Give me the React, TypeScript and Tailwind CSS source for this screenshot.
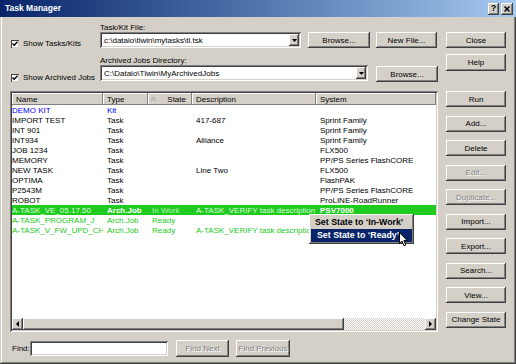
import React from "react";

const raised =
  "shadow-[inset_-1px_-1px_0_#404040,inset_1px_1px_0_#ffffff,inset_-2px_-2px_0_#808080,inset_2px_2px_0_#d4d0c8]";
const raisedThin = "shadow-[inset_-1px_-1px_0_#808080,inset_1px_1px_0_#ffffff]";
const sunken =
  "shadow-[inset_1px_1px_0_#808080,inset_-1px_-1px_0_#ffffff,inset_2px_2px_0_#404040,inset_-2px_-2px_0_#d4d0c8]";

type Row = {
  name: string;
  type: string;
  state?: string;
  desc?: string;
  sys?: string;
  kind: "kit" | "task" | "job" | "sel";
};

const rows: Row[] = [
  { name: "DEMO KIT", type: "Kit", kind: "kit" },
  { name: "IMPORT TEST", type: "Task", desc: "417-687", sys: "Sprint Family", kind: "task" },
  { name: "INT 901", type: "Task", sys: "Sprint Family", kind: "task" },
  { name: "INT934", type: "Task", desc: "Alliance", sys: "Sprint Family", kind: "task" },
  { name: "JOB 1234", type: "Task", sys: "FLX500", kind: "task" },
  { name: "MEMORY", type: "Task", sys: "PP/PS Series FlashCORE", kind: "task" },
  { name: "NEW TASK", type: "Task", desc: "Line Two", sys: "FLX500", kind: "task" },
  { name: "OPTIMA", type: "Task", sys: "FlashPAK", kind: "task" },
  { name: "P2543M", type: "Task", sys: "PP/PS Series FlashCORE", kind: "task" },
  { name: "ROBOT", type: "Task", sys: "ProLINE-RoadRunner", kind: "task" },
  {
    name: "A-TASK_VE_05.17.50",
    type: "Arch.Job",
    state: "In Work",
    desc: "A-TASK_VERIFY task description",
    sys: "PSV7000",
    kind: "sel",
  },
  { name: "A-TASK_PROGRAM_J", type: "Arch.Job", state: "Ready", kind: "job" },
  {
    name: "A-TASK_V_FW_UPD_CH",
    type: "Arch.Job",
    state: "Ready",
    desc: "A-TASK_VERIFY task description",
    kind: "job",
  },
];

function Btn({
  label,
  className = "",
  disabled = false,
}: {
  label: string;
  className?: string;
  disabled?: boolean;
}) {
  return (
    <div
      className={`flex shrink-0 items-center justify-center bg-[#d4d0c8] ${raised} ${
        disabled ? "text-[#808080] [text-shadow:1px_1px_0_#ffffff]" : "text-black"
      } ${className}`}
    >
      {label}
    </div>
  );
}

function Combo({ value, className = "" }: { value: string; className?: string }) {
  return (
    <div className={`flex h-[16px] shrink-0 items-center bg-white pl-[4px] ${sunken} ${className}`}>
      <span className="flex-1 truncate">{value}</span>
      <div className={`mr-[2px] flex h-[12px] w-[10px] items-center justify-center bg-[#d4d0c8] ${raised}`}>
        <svg width="5" height="3" viewBox="0 0 5 3">
          <path d="M0 0h5L2.5 3z" fill="#000" />
        </svg>
      </div>
    </div>
  );
}

function Check({ label }: { label: string }) {
  return (
    <div className="flex items-center gap-[4px] pl-[1px]">
      <div className="flex h-[8px] w-[8px] items-center justify-center bg-white shadow-[inset_1px_1px_0_#404040,inset_-1px_-1px_0_#d4d0c8]">
        <svg width="6" height="6" viewBox="0 0 6 6">
          <path d="M0.5 2.5L2.2 4.3L5.5 0.8" stroke="#000" strokeWidth="1.4" fill="none" />
        </svg>
      </div>
      <span>{label}</span>
    </div>
  );
}

export default function App() {
  return (
    <div className="relative h-[364px] w-[516px] overflow-hidden bg-[#d4d0c8] font-['Liberation_Sans',Arial,sans-serif] text-[8px] leading-[9px] text-black shadow-[inset_-1px_-1px_0_#404040,inset_1px_0_0_#d4d0c8,inset_-2px_-2px_0_#808080,inset_2px_0_0_#ffffff]">
      {/* title bar */}
      <div className="flex h-[17px] items-center justify-between bg-linear-to-r from-[#0a246a] to-[#a6caf0] pl-[5px] pr-[3px]">
        <span className="text-[8.5px] font-bold text-white">Task Manager</span>
        <div className="flex gap-[2px]">
          <div className={`flex h-[12px] w-[11px] items-center justify-center bg-[#d4d0c8] text-[9px] font-bold ${raised}`}>?</div>
          <div className={`flex h-[12px] w-[12px] items-center justify-center bg-[#d4d0c8] ${raised}`}>
            <svg width="6" height="6" viewBox="0 0 6 6">
              <path d="M0.5 0.5L5.5 5.5M5.5 0.5L0.5 5.5" stroke="#000" strokeWidth="1.5" />
            </svg>
          </div>
        </div>
      </div>

      <div className="flex pl-[10px]">
        {/* left column */}
        <div className="flex w-[428px] flex-col pt-[6px]">
          <div className="flex">
            <div className="w-[90px] pt-[16px]">
              <Check label="Show Tasks/Kits" />
            </div>
            <div className="flex flex-col">
              <span className="h-[9px]">Task/Kit File:</span>
              <div className="flex items-center">
                <Combo value="c:\dataio\tlwin\mytasks\tl.tsk" className="w-[201px]" />
                <Btn label="Browse..." className="ml-[7px] h-[16px] w-[62px]" />
                <Btn label="New File..." className="ml-[6px] h-[16px] w-[61px]" />
              </div>
            </div>
          </div>

          <div className="mt-[8px] flex">
            <div className="w-[90px] pt-[17px]">
              <Check label="Show Archived Jobs" />
            </div>
            <div className="flex flex-col">
              <span className="h-[9px]">Archived Jobs Directory:</span>
              <div className="flex items-start">
                <Combo value="C:\Dataio\Tlwin\MyArchivedJobs" className="w-[268px]" />
                <Btn label="Browse..." className="ml-[8px] mt-[1px] h-[16px] w-[62px]" />
              </div>
            </div>
          </div>

          {/* list */}
          <div className={`mt-[9px] flex h-[241px] flex-col bg-white p-[2px] ${sunken}`}>
            <div className="flex h-[12px] shrink-0 bg-[#d4d0c8]">
              <div className={`flex w-[91px] items-center pl-[4px] ${raisedThin}`}>Name</div>
              <div className={`flex w-[45px] items-center pl-[4px] ${raisedThin}`}>Type</div>
              <div className={`flex w-[44px] items-center justify-between pl-[3px] pr-[6px] ${raisedThin}`}>
                <svg width="5" height="4" viewBox="0 0 5 4">
                  <path d="M2.5 0L5 4H0z" fill="none" stroke="#a0a0a0" strokeWidth="0.8" />
                </svg>
                <span>State</span>
              </div>
              <div className={`flex w-[124px] items-center pl-[4px] ${raisedThin}`}>Description</div>
              <div className={`flex flex-1 items-center pl-[4px] ${raisedThin}`}>System</div>
            </div>
            <div className="flex-1">
              {rows.map((r) => {
                const sel = r.kind === "sel";
                const color =
                  r.kind === "kit"
                    ? "text-[#0000ff]"
                    : r.kind === "task"
                      ? "text-black"
                      : sel
                        ? "text-[#dcffdc]"
                        : "text-[#22c922]";
                return (
                  <div
                    key={r.name}
                    className={`flex h-[10px] items-center whitespace-nowrap ${sel ? "bg-[#1fcb1f]" : ""} ${color}`}
                  >
                    <div className="w-[91px] shrink-0 overflow-hidden">{r.name}</div>
                    <div className={`w-[45px] shrink-0 overflow-hidden pl-[4px] ${sel ? "font-bold text-white" : ""}`}>{r.type}</div>
                    <div className={`w-[44px] shrink-0 overflow-hidden pl-[4px] ${sel ? "text-[#b4f5b4]" : ""}`}>{r.state}</div>
                    <div className="w-[124px] shrink-0 overflow-hidden pl-[4px]">{r.desc}</div>
                    <div className={`flex-1 overflow-hidden pl-[4px] ${sel ? "font-bold text-white" : ""}`}>{r.sys}</div>
                  </div>
                );
              })}
            </div>
            <div className="flex h-[12px] shrink-0">
              <div className={`flex w-[11px] items-center justify-center bg-[#d4d0c8] ${raised}`}>
                <svg width="3" height="6" viewBox="0 0 3 6">
                  <path d="M3 0v6L0 3z" fill="#000" />
                </svg>
              </div>
              <div className={`w-[321px] bg-[#d4d0c8] ${raised}`} />
              <div className="flex-1 bg-[repeating-conic-gradient(#d4d0c8_0_25%,#ffffff_0_50%)] [background-size:2px_2px]" />
              <div className={`flex w-[11px] items-center justify-center bg-[#d4d0c8] ${raised}`}>
                <svg width="3" height="6" viewBox="0 0 3 6">
                  <path d="M0 0v6L3 3z" fill="#000" />
                </svg>
              </div>
            </div>
          </div>

          {/* find row */}
          <div className="mt-[8px] flex items-center">
            <span className="w-[20px] pl-[2px]">Find:</span>
            <div className={`h-[15px] w-[138px] bg-white ${sunken}`} />
            <Btn label="Find Next" disabled className="ml-[8px] h-[17px] w-[53px]" />
            <Btn label="Find Previous" disabled className="ml-[7px] h-[17px] w-[54px]" />
          </div>
        </div>

        {/* right column */}
        <div className="ml-[8px] flex w-[60px] flex-col pt-[15px]">
          <Btn label="Close" className="h-[16px]" />
          <Btn label="Help" className="mt-[6px] h-[17px]" />
          <div className="mt-[20px] flex flex-col gap-[8.5px]">
            <Btn label="Run" className="h-[16px]" />
            <Btn label="Add..." className="h-[16px]" />
            <Btn label="Delete" className="h-[16px]" />
            <Btn label="Edit..." disabled className="h-[16px]" />
            <Btn label="Duplicate..." disabled className="h-[16px]" />
            <Btn label="Import..." className="h-[16px]" />
            <Btn label="Export..." className="h-[16px]" />
            <Btn label="Search..." className="h-[16px]" />
            <Btn label="View..." className="h-[16px]" />
            <Btn label="Change State" className="h-[16px]" />
          </div>
        </div>
      </div>

      {/* context menu */}
      <div className={`absolute left-[309px] top-[214px] flex w-[105px] flex-col bg-[#d4d0c8] p-[2px] text-[8.8px] font-bold ${raised}`}>
        <div className="flex h-[13px] items-center pl-[4px]">Set State to ‘In-Work’</div>
        <div className="flex h-[13px] items-center bg-[#0a246a] pl-[6px] text-white">Set State to ‘Ready’</div>
      </div>

      {/* mouse cursor */}
      <svg className="absolute left-[399px] top-[232px]" width="9" height="15" viewBox="0 0 9 15">
        <path d="M0.5 0.5V11.5L3 9.2L5 13.8L6.8 13L4.9 8.6H8.2Z" fill="#fff" stroke="#000" strokeWidth="1" strokeLinejoin="round" />
      </svg>
    </div>
  );
}
